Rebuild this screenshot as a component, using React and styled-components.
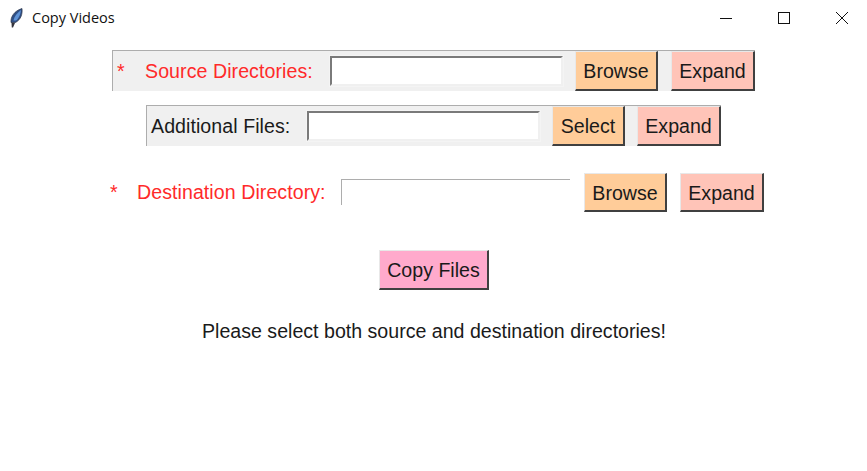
import React from 'react'
import styled, { createGlobalStyle } from 'styled-components'

const GlobalStyle = createGlobalStyle`
  html, body {
    margin: 0;
    padding: 0;
    background: #fff;
  }
`

const Win = styled.div`
  width: 867px;
  height: 471px;
  overflow: hidden;
  background: #fff;
  font-family: 'Liberation Sans', Arial, sans-serif;
  font-size: 19.6px;
  color: #1a1a1a;
`

const TitleBar = styled.div`
  height: 36px;
  display: flex;
  align-items: center;
  padding-left: 9px;
`

const Title = styled.div`
  margin-left: 9px;
  margin-top: -2px;
  font-family: 'Open Sans', sans-serif;
  font-size: 14.5px;
  color: #111;
`

const WinControls = styled.div`
  margin-left: auto;
  margin-right: -4px;
  display: flex;
`

const WinBtn = styled.div`
  width: 58px;
  height: 36px;
  display: flex;
  align-items: center;
  justify-content: center;
`

const Form = styled.div`
  display: flex;
  flex-direction: column;
  align-items: flex-start;
  padding-top: 14px;
`

const Row = styled.div`
  display: flex;
  align-items: flex-start;
  height: ${p => p.$h}px;
  margin-left: ${p => p.$left}px;
  margin-top: ${p => p.$top}px;
  background: ${p => (p.$flat ? 'transparent' : '#f0f0f0')};
  border-top: ${p => (p.$flat ? 'none' : '1px solid #adadad')};
  border-left: ${p => (p.$flat ? 'none' : '1px solid #adadad')};
`

const Star = styled.span`
  width: ${p => p.$w}px;
  margin-left: ${p => p.$indent || 0}px;
  color: #ff2a2a;
  line-height: ${p => p.$lh}px;
`

const Label = styled.span`
  width: ${p => p.$w}px;
  margin-left: ${p => p.$indent || 0}px;
  white-space: nowrap;
  letter-spacing: 0.06px;
  color: ${p => (p.$required ? '#ff2a2a' : '#1a1a1a')};
  line-height: ${p => p.$lh}px;
`

const Input = styled.div`
  box-sizing: border-box;
  width: 233px;
  height: 30px;
  margin-top: 5px;
  background: #fff;
  border-top: 2px solid #7a7a7a;
  border-left: 2px solid #7a7a7a;
  border-right: 2px solid #f0f0f0;
  border-bottom: 2px solid #f0f0f0;
  outline: 1px solid #f4f4f4;
`

const FlatInput = styled.div`
  box-sizing: border-box;
  width: 229px;
  height: 26px;
  margin-top: 6px;
  background: #fff;
  border-top: 1px solid #adadad;
  border-left: 1px solid #adadad;
`

const Button = styled.button`
  box-sizing: border-box;
  width: ${p => p.$w}px;
  height: ${p => p.$bh || 40}px;
  margin-left: ${p => p.$gap}px;
  padding: 2px 0 0;
  font-family: inherit;
  font-size: 19.6px;
  color: #1a1a1a;
  background: ${p => p.$bg};
  border: none;
  border-top: 1px solid #e8e8e8;
  border-left: 1px solid #e8e8e8;
  border-right: 2px solid #404040;
  border-bottom: 2px solid #404040;
`

const CopyRow = styled.div`
  margin: 37px 0 0 379px;
`

const Message = styled.div`
  margin: 30px 0 0 202px;
  line-height: 23px;
  white-space: nowrap;
`

const Feather = () => (
  <svg width="14" height="20" viewBox="0 0 14 20">
    <path d="M2 14.5C1.5 9 5 3 13 .5c.6 5.500-1 11-6.500 14z" fill="#2f4f86" stroke="#2a3347" strokeWidth="0.7" />
    <path d="M4.500 12.500C5 9 8 5 12 2c-.5 4-2 8.500-5 10.500z" fill="#5f93d6" />
    <path d="M2.500 14.500L2.800 19.500 4 19.500 6 15z" fill="#34343c" />
  </svg>
)

const App = () => (
  <Win>
    <GlobalStyle />
    <TitleBar>
      <Feather />
      <Title>Copy Videos</Title>
      <WinControls>
        <WinBtn>
          <svg width="12" height="12" viewBox="0 0 12 12">
            <path d="M0 6.500h12" stroke="#111" strokeWidth="1" />
          </svg>
        </WinBtn>
        <WinBtn>
          <svg width="12" height="12" viewBox="0 0 12 12">
            <rect x="0.5" y="0.5" width="11" height="11" fill="none" stroke="#111" />
          </svg>
        </WinBtn>
        <WinBtn>
          <svg width="12" height="12" viewBox="0 0 12 12">
            <path d="M0 0l12 12M12 0L0 12" stroke="#111" strokeWidth="1" />
          </svg>
        </WinBtn>
      </WinControls>
    </TitleBar>
    <Form>
      <Row $left={112} $top={0} $h={40}>
        <Star $w={28} $lh={40} $indent={4}>*</Star>
        <Label $required $w={185} $lh={40}>Source Directories:</Label>
        <Input />
        <Button $w={83} $gap={12} $bg="#ffcc99">Browse</Button>
        <Button $w={84} $gap={13} $bg="#ffc4b8">Expand</Button>
      </Row>
      <Row $left={146} $top={14} $h={40}>
        <Label $w={156} $lh={40} $indent={4}>Additional Files:</Label>
        <Input />
        <Button $w={73} $gap={12} $bg="#ffcc99">Select</Button>
        <Button $w={84} $gap={12} $bg="#ffc4b8">Expand</Button>
      </Row>
      <Row $left={110} $top={27} $h={40} $flat>
        <Star $w={27} $lh={39}>*</Star>
        <Label $required $w={204} $lh={39}>Destination Directory:</Label>
        <FlatInput />
        <Button $w={83} $bh={39} $gap={14} $bg="#ffcc99">Browse</Button>
        <Button $w={84} $bh={39} $gap={13} $bg="#ffc4b8">Expand</Button>
      </Row>
      <CopyRow>
        <Button $w={110} $gap={0} $bg="#ffaacc">Copy Files</Button>
      </CopyRow>
      <Message>Please select both source and destination directories!</Message>
    </Form>
  </Win>
)

export default App
